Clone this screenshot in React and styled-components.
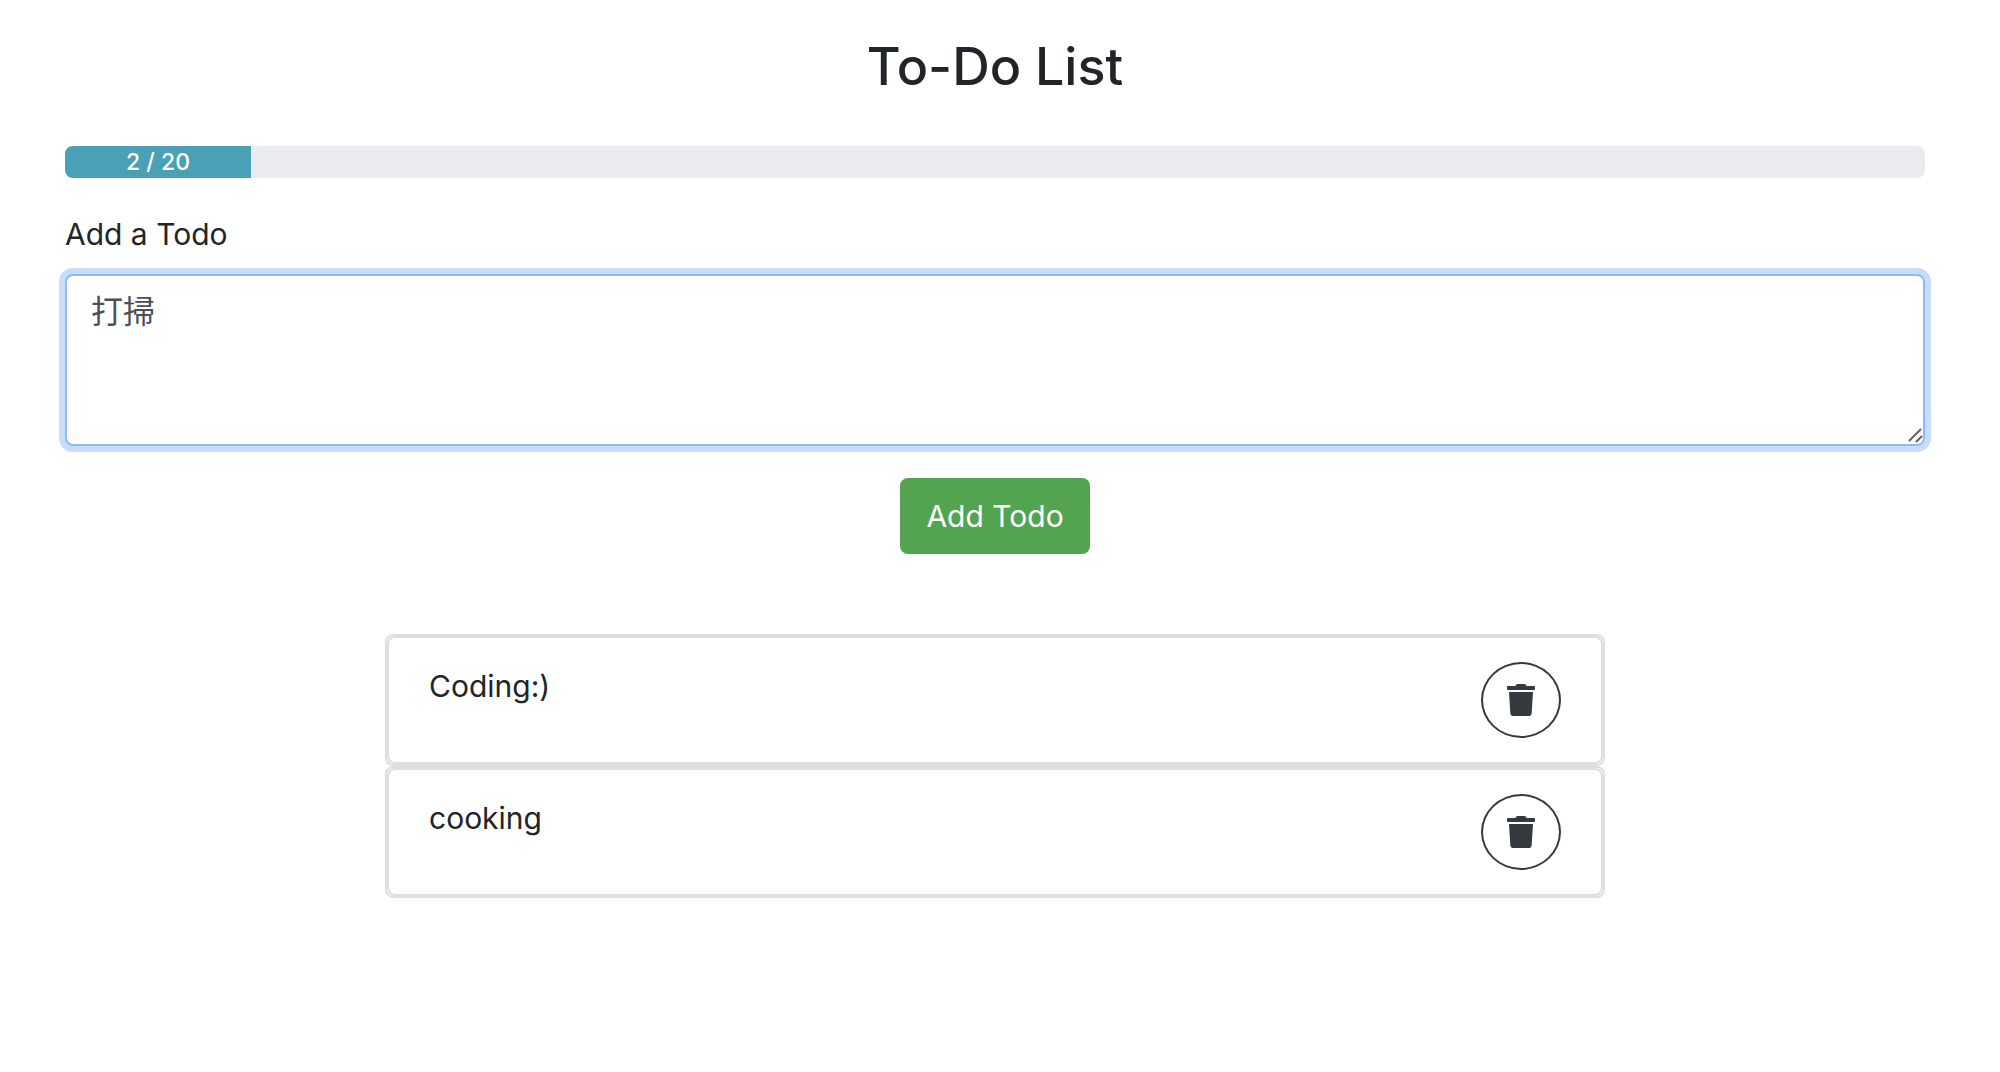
import React, { useState } from "react";
import styled, { createGlobalStyle } from "styled-components";
import { FaTrash } from "react-icons/fa";

const GlobalStyle = createGlobalStyle`
  *, *::before, *::after { box-sizing: border-box; }
  body {
    margin: 0;
    background: #fff;
    color: #212529;
    font-family: Inter, "Noto Sans CJK TC", sans-serif;
    font-size: 30px;
    line-height: 48px;
  }
`;

const Page = styled.main`
  padding: 32px 75px 32px 65px;
`;

const Title = styled.h1`
  margin: 0 0 44px;
  font-size: 52px;
  font-weight: 500;
  line-height: 70px;
  text-align: center;
`;

const Progress = styled.div`
  display: flex;
  height: 32px;
  overflow: hidden;
  background: #e9ebef;
  border-radius: 8px;
`;

const ProgressBar = styled.div`
  display: flex;
  align-items: center;
  justify-content: center;
  color: #fff;
  background: #4aa0b5;
  font-size: 23px;
  font-weight: 500;
  line-height: 32px;
`;

const Form = styled.form`
  display: flex;
  flex-direction: column;
  align-items: center;
  margin-top: 32px;
`;

const Label = styled.label`
  align-self: stretch;
  margin-bottom: 16px;
`;

const Field = styled.div`
  position: relative;
  display: flex;
  align-self: stretch;
  margin-bottom: 32px;
`;

const TextArea = styled.textarea`
  flex: 1;
  padding: 12px 24px;
  border: 2px solid #8bbafa;
  border-radius: 8px;
  outline: none;
  box-shadow: 0 0 0 6px #cadcfd;
  background: #fff;
  color: #495057;
  font: inherit;
  font-size: 32px;
  resize: vertical;

  &::-webkit-resizer { display: none; }
`;

const Grip = styled.svg`
  position: absolute;
  right: 0;
  bottom: 2px;
  pointer-events: none;
`;

const AddButton = styled.button`
  padding: 12px 24px;
  border: 2px solid #53a451;
  border-radius: 8px;
  background: #53a451;
  color: #fff;
  font: inherit;
  cursor: pointer;
`;

const List = styled.ul`
  width: 1220px;
  max-width: 100%;
  margin: 80px auto 0;
  padding: 0;
  list-style: none;
`;

const Item = styled.li`
  border: 2px solid #dfdfdf;
  border-radius: 8px;
`;

const ItemBody = styled.div`
  display: flex;
  align-items: flex-start;
  justify-content: space-between;
  padding: 24px 40px;
  border: 2px solid #dfdfdf;
  border-radius: 8px;
`;

const DeleteButton = styled.button`
  display: flex;
  align-items: center;
  justify-content: center;
  width: 80px;
  height: 76px;
  padding: 0;
  border: 2px solid #343a40;
  border-radius: 50%;
  background: transparent;
  color: #343a40;
  cursor: pointer;

  svg { width: 28px; height: 32px; }
`;

const LIMIT = 20;

export default function App() {
  const [todos, setTodos] = useState(["Coding:)", "cooking"]);
  const [draft, setDraft] = useState("打掃");

  const addTodo = (event) => {
    event.preventDefault();
    if (draft.trim() && todos.length < LIMIT) {
      setTodos([...todos, draft.trim()]);
      setDraft("");
    }
  };

  return (
    <>
      <GlobalStyle />
      <Page>
        <Title>To-Do List</Title>
        <Progress
          role="progressbar"
          aria-label="Todos"
          aria-valuenow={todos.length}
          aria-valuemin={0}
          aria-valuemax={LIMIT}
        >
          <ProgressBar style={{ width: `${(todos.length / LIMIT) * 100}%` }}>
            {`${todos.length} / ${LIMIT}`}
          </ProgressBar>
        </Progress>
        <Form onSubmit={addTodo}>
          <Label htmlFor="todo">Add a Todo</Label>
          <Field>
            <TextArea
              id="todo"
              rows={3}
              value={draft}
              onChange={(event) => setDraft(event.target.value)}
            />
            <Grip width="18" height="18" viewBox="0 0 18 18" aria-hidden="true">
              <path d="M2 15 14 3M9 16l6-6" stroke="#5f6062" strokeWidth="2" fill="none" />
            </Grip>
          </Field>
          <AddButton type="submit">Add Todo</AddButton>
        </Form>
        <List>
          {todos.map((todo, index) => (
            <Item key={index}>
              <ItemBody>
                <span>{todo}</span>
                <DeleteButton
                  type="button"
                  aria-label={`Delete ${todo}`}
                  onClick={() => setTodos(todos.filter((_, i) => i !== index))}
                >
                  <FaTrash />
                </DeleteButton>
              </ItemBody>
            </Item>
          ))}
        </List>
      </Page>
    </>
  );
}
